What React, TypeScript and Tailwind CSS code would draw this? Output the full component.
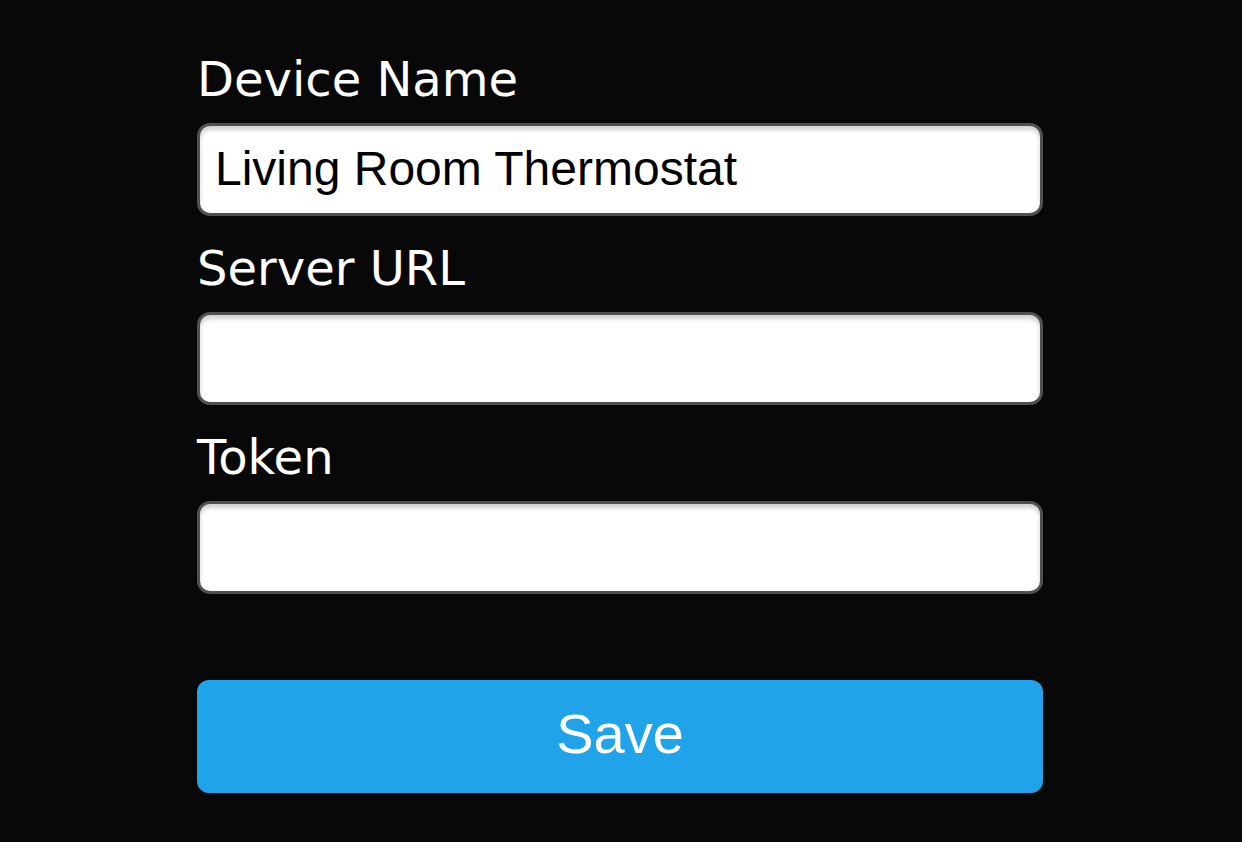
import React from "react";

function Field({ label, value, first }: { label: string; value?: string; first?: boolean }) {
  return (
    <div className={first ? "flex flex-col" : "flex flex-col mt-[24px]"}>
      <label
        className="text-white text-[48px] leading-[56px]"
        style={{ fontFamily: '"DejaVu Sans", Verdana, sans-serif' }}
      >
        {label}
      </label>
      <input
        defaultValue={value}
        className="mt-[16px] h-[93px] w-full rounded-[13px] border-[3px] border-[#505050] bg-white pl-[15px] pb-[2px] text-[48px] text-black outline-none shadow-[inset_0_4px_4px_rgba(0,0,0,0.18)]"
        style={{ fontFamily: '"Liberation Sans", Arial, sans-serif' }}
      />
    </div>
  );
}

export default function App() {
  return (
    <div className="min-h-screen w-full bg-[#080808] flex justify-center pr-[2px]">
      <div className="w-[846px] pt-[51px] flex flex-col">
        <Field label="Device Name" value="Living Room Thermostat" first />
        <Field label="Server URL" />
        <Field label="Token" />
        <button
          className="mt-[86px] h-[113px] w-full rounded-[12px] bg-[#20a3e9] text-white text-[56px] leading-none pb-[6px] flex items-center justify-center"
          style={{ fontFamily: '"Liberation Sans", Arial, sans-serif' }}
        >
          Save
        </button>
      </div>
    </div>
  );
}
